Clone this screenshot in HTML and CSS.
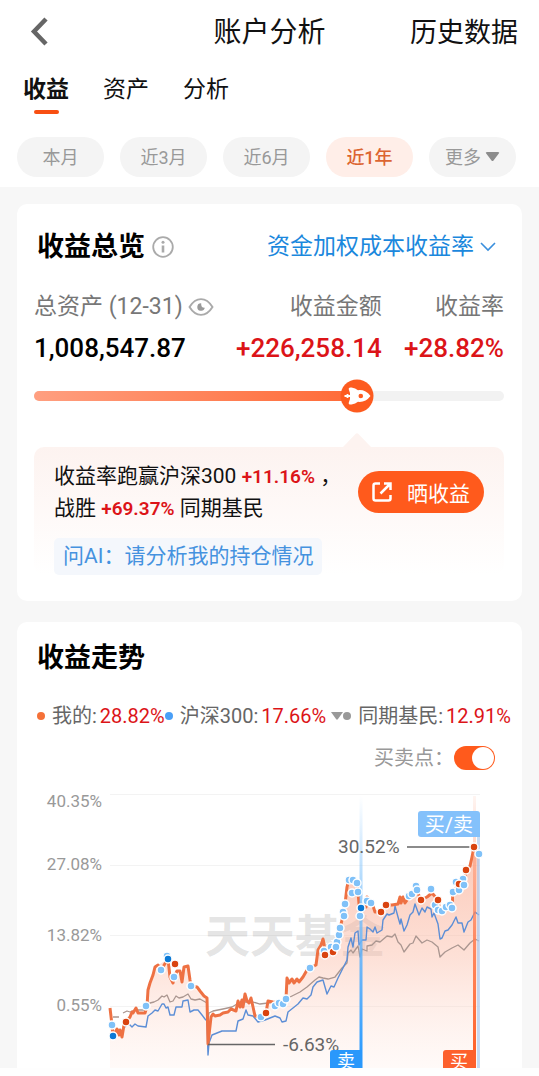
FILE: index.html
```html
<!DOCTYPE html>
<html lang="zh-CN">
<head>
<meta charset="utf-8">
<meta name="viewport" content="width=device-width, initial-scale=1">
<title>账户分析</title>
<link rel="stylesheet" href="styles.css">
</head>
<body>
<header class="top">
  <div class="navbar">
    <button class="back" aria-label="返回"><svg width="18" height="30" viewBox="0 0 18 30" fill="none" stroke="#666" stroke-width="4.5"><path d="M16 2 4 14.500 16 27"/></svg></button>
    <h1 class="page-title">账户分析</h1>
    <a class="history" href="#">历史数据</a>
  </div>
  <nav class="tabs">
    <a class="tab tab-active" href="#">收益</a>
    <a class="tab" href="#">资产</a>
    <a class="tab" href="#">分析</a>
  </nav>
  <div class="chips">
    <button class="chip">本月</button>
    <button class="chip">近3月</button>
    <button class="chip">近6月</button>
    <button class="chip chip-active">近1年</button>
    <button class="chip">更多<svg width="15" height="11" viewBox="0 0 15 11" fill="#8c8c8c"><path d="M2 1h11q2 0 .8 1.500L8.500 9.500q-1 1.200-2 0L1.200 2.500Q0 1 2 1z"/></svg></button>
  </div>
</header>
<main class="content">
  <section class="card overview">
    <div class="card-head">
      <h2 class="card-title">收益总览</h2>
      <svg class="info" width="22" height="22" viewBox="0 0 22 22" fill="none" stroke="#aaa" stroke-width="1.800"><circle cx="11" cy="11" r="9.800"/><path d="M11 9.500v7" stroke-width="2.600"/><circle cx="11" cy="6.300" r="1.500" fill="#aaa" stroke="none"/></svg>
      <button class="rate-type">资金加权成本收益率<svg width="16" height="10" viewBox="0 0 16 10" fill="none" stroke="#3a8fdd" stroke-width="1.600"><path d="m1 1 7 7 7-7"/></svg></button>
    </div>
    <dl class="stats">
      <div class="stat">
        <dt>总资产 (12-31)<svg width="26" height="20" viewBox="0 0 26 20" fill="none" stroke="#aaa" stroke-width="1.900"><path d="M1.500 10C8-.5 18-.5 24.500 10 18 20.500 8 20.500 1.500 10z"/><path d="M13.200 6.200a3.800 3.800 0 1 0 3.600 4.600q-4 .2-3.600-4.600z" fill="#999" stroke="none"/></svg></dt>
        <dd>1,008,547.87</dd>
      </div>
      <div class="stat stat-right"><dt>收益金额</dt><dd class="up">+226,258.14</dd></div>
      <div class="stat stat-right"><dt>收益率</dt><dd class="up">+28.82%</dd></div>
    </dl>
    <div class="rank" role="progressbar" aria-label="战胜同期基民" aria-valuenow="69">
      <div class="rank-fill" style="width:68.7%"></div>
      <svg class="rocket" style="left:68.7%" width="34" height="34" viewBox="0 0 34 34"><circle cx="17" cy="17" r="16.500" fill="#fd5b1f"/><path d="M10 14 8.800 10.500Q8.200 8 11.500 8.500q4 .7 6.500 2.700 7.500-.8 12.500 5.800-5 6.600-12.500 5.800-2.500 2-6.500 2.700-3.300.5-2.700-2L10 20z" fill="#fff"/><path d="M4.500 17h7M7.500 15v4" stroke="#fff" stroke-width="1.800"/><circle cx="20.800" cy="17" r="2.300" fill="#fd5b1f"/></svg>
    </div>
    <div class="notch-row" aria-hidden="true"><svg class="notch" style="left:68.7%" width="28" height="14" viewBox="0 0 28 14" fill="#fdf3f0"><path d="M0 14 12.500 1q1.500-1.500 3 0L28 14z"/></svg></div>
    <div class="summary">
      <div class="summary-row">
        <p class="summary-text">收益率跑赢沪深300 <b class="num">+11.16%</b> ，<br>战胜 <b class="num">+69.37%</b> 同期基民</p>
        <button class="share"><svg width="20" height="20" viewBox="0 0 20 20" fill="none" stroke="#fff" stroke-width="2.500"><path d="M8 1.500H3.500q-2 0-2 2v13q0 2 2 2h13q2 0 2-2V13M8.500 11.500 17.500 2.500M12 1.500h6.500V8"/></svg>晒收益</button>
      </div>
      <a class="ask" href="#">问AI：请分析我的持仓情况</a>
    </div>
  </section>

  <section class="card trend">
    <h2 class="card-title">收益走势</h2>
    <ul class="legend">
      <li><i class="dot dot-mine"></i>我的: <span class="up">28.82%</span></li>
      <li><i class="dot dot-index"></i>沪深300: <span class="up">17.66%</span><svg class="caret" width="12" height="8" viewBox="0 0 12 8" fill="#999"><path d="M0 0h12L6.800 7.200q-.8.900-1.600 0z"/></svg></li>
      <li><i class="dot dot-peer"></i>同期基民: <span class="up">12.91%</span></li>
    </ul>
    <div class="switch-row"><label for="trades">买卖点：</label><input class="switch" id="trades" type="checkbox" role="switch" checked></div>
    <svg class="chart" viewBox="17 784 505 284" role="img" aria-label="收益走势">
      <defs>
        <linearGradient id="area" x1="0" y1="0" x2="0" y2="1"><stop offset="0" stop-color="#f9aa90" stop-opacity=".65"/><stop offset=".5" stop-color="#fbbba6" stop-opacity=".45"/><stop offset="1" stop-color="#ffe5dc" stop-opacity=".2"/></linearGradient>
        <linearGradient id="sell" gradientUnits="userSpaceOnUse" x1="0" y1="796" x2="0" y2="1068"><stop offset="0" stop-color="#8fcaff" stop-opacity="0"/><stop offset=".4" stop-color="#7cc0fa" stop-opacity=".8"/><stop offset="1" stop-color="#2196ff"/></linearGradient>
        <linearGradient id="buy" gradientUnits="userSpaceOnUse" x1="0" y1="796" x2="0" y2="1068"><stop offset="0" stop-color="#ff9b78" stop-opacity=".1"/><stop offset=".5" stop-color="#ff8055" stop-opacity=".85"/><stop offset="1" stop-color="#ff5a1f"/></linearGradient>
        <path id="mine" d="M110 1008l2 17 1 11 4-7 2 6 1-5 2 7 2-12 2-3 4-5 2-5 1 1 3-5 2 5h7l2-7 1-16 2-7 3-8 2-8 3-2 3 5 5-8 2-3 2 18 3 6 1-6 3-6h3l2 11 2-15 4-1 2 14 1 6 6 1 3 4 4 5 3 2 1 46 3-27 2-3 2 2 5-1 3-2 5-1 3-3 5 2 2-10 2 6 2-7 1 7 2-13 2 7 2 2 2-5 2 9 2 9 5 1 6-4 2-12 5 1 7 1 3 1 3-5 1-21 2 5 3-4 2 4 3-4 2 3 4-5 4-7 3-2 6-3 2-15 3-5 2-6 1 4 1 12 8-3 3-5 3-12 1-7 3-12 2-12 2-17 2-8 8 4 1 9 2 24 1-8 5-1 1-10 5 6 3 9h6l5-7h6l6-1 2-7 1 6 2-6 2 6 5-7 6-9 1 4 4 9 6-3 5-4 6 7 2 12 12-4 1-16 4-5 7-2 2-15 4-4 2-9 2-10 5 6"/>
      </defs>
      <g stroke="#f3f3f3"><path d="M110 794.500H480M110 865.500H480M110 935.500H480M110 1006.500H480"/></g>
      <g class="axis" text-anchor="end"><text x="102" y="807">40.35%</text><text x="102" y="870">27.08%</text><text x="102" y="941">13.82%</text><text x="102" y="1011">0.55%</text></g>
      <text class="watermark" x="205" y="953">天天基金</text>
      <path fill="url(#area)" d="M110 1068V1008L113 1036 117 1029 122 1037 126 1022 136 1008 138 1013H145L148 990 155 967 168 959 173 983 177 971 182 982 184 967 188 966 191 986 204 996 207 998 208 1044 211 1017 236 1011 245 994 255 1016 266 1013 268 1001 283 1004 286 999 287 978 299 982 310 968 316 965 323 939 325 955 333 952 339 935 347 887 349 879 357 883 360 916 367 897 375 912 386 905 398 904 416 887 421 900 432 893 440 912 452 908 457 887 464 885 474 847 479 853V1068z"/>
      <g fill="none" stroke-linejoin="round">
        <path stroke="#aa9690" stroke-width="1.300" d="M113 1017h6M123 1013l4-2 3 1 5-2h10l5-7 4-1 4-2 4-4 2 1 3-2 3 7 3-1 3-5 3 2 4-1 5-3 3 5 4 1 5-1 7 4 1 17 1-7 4-2 10-2 9-2 5-3 8-2h8l7 2 8-1 9-1 13-5 10-5 7-5 8-7 4-3 4 1 5 1 7-2 7-9 5-5 1-10 3-3 2 3 5-7 2 11 2-8 5 2V946l5-1 4-4 4 1 7-6 5 1 3-3 3 8 3 3 3 7 6-8 3-1 3-7 6 7 5-3 5 2 6 5 2 10 5-5 7-4 6-3 6 5 6-7 5-4 4 2"/>
        <path stroke="#5c8ed6" stroke-width="1.400" d="M125 1027l3-4 4 4 3-3 3 2 8 1 2-11 4-3 3-3 3 1 4-7h2l2 4 2-1 2 8h4l2-8h6l1-6 5-1 2 12 4-2h4l4 5 3 4 2 2 1 34 1-12 3-8 10-4h14l2-10 5-2 3-9 2 5 5 1 5 6 7-2 5-2 5-2 5 2 2 4 4-1 2-9 5-4 5-4 5-6 4 1 4-4 2-8 4-5 6-2 4 14 4-8 3 1 4-9 5-10 4-8 1-13 3-9 2 9 2-14 3-2 1 14 3-5 4 0 1-13 3 2 3 3 2-5 2 6 5-3 1-10 4-6 2 1 5-2 1-7 3 11 2 7 1-5 3 12 3-6 3-10 3-3 2-8 4 11 3-7 3 4 2-5 4 2 1 8 2-4 4 11 2 15 2-1 3-7 3-1 4-5 4-8 2 6 4 0 2 9 4-10 3-2 4-8 4 3"/>
        <use href="#mine" stroke="#ee7143" stroke-width="3"/>
      </g>
      <path fill="url(#sell)" d="M359.500 796h3v272h-3z"/>
      <path fill="#a9caf0" fill-opacity=".65" d="M477 836h3v232h-3z"/>
      <path fill="url(#buy)" d="M473 796h3v272h-3z"/>
      <g class="trade-light"><circle cx="112" cy="1025" r="4"/><circle cx="146" cy="1006" r="4"/><circle cx="161" cy="970" r="4"/><circle cx="167" cy="956" r="4"/><circle cx="174" cy="977" r="4"/><circle cx="191" cy="986" r="4"/><circle cx="261" cy="1017" r="4"/><circle cx="275" cy="1006" r="4"/><circle cx="279" cy="1003" r="4"/><circle cx="283" cy="1004" r="4"/><circle cx="286" cy="999" r="4"/><circle cx="310" cy="968" r="4"/><circle cx="324" cy="951" r="4"/><circle cx="331" cy="947" r="4"/><circle cx="336" cy="947" r="4"/><circle cx="337" cy="942" r="4"/><circle cx="339" cy="935" r="4"/><circle cx="340" cy="928" r="4"/><circle cx="343" cy="912" r="4"/><circle cx="344" cy="916" r="4"/><circle cx="345" cy="904" r="4"/><circle cx="349" cy="880" r="4"/><circle cx="353" cy="880" r="4"/><circle cx="357" cy="883" r="4"/><circle cx="352" cy="893" r="4"/><circle cx="358" cy="892" r="4"/><circle cx="360" cy="916" r="4"/><circle cx="367" cy="901" r="4"/><circle cx="371" cy="903" r="4"/><circle cx="409" cy="896" r="4"/><circle cx="412" cy="894" r="4"/><circle cx="416" cy="886" r="4"/><circle cx="417" cy="890" r="4"/><circle cx="431" cy="889" r="4"/><circle cx="435" cy="905" r="4"/><circle cx="438" cy="910" r="4"/><circle cx="442" cy="911" r="4"/><circle cx="446" cy="907" r="4"/><circle cx="450" cy="905" r="4"/><circle cx="452" cy="908" r="4"/><circle cx="453" cy="892" r="4"/><circle cx="459" cy="890" r="4"/><circle cx="456" cy="882" r="4"/><circle cx="463" cy="879" r="4"/></g>
      <g class="trade-buy"><circle cx="126" cy="1022" r="4"/><circle cx="175" cy="964" r="4"/><circle cx="266" cy="1013" r="4"/><circle cx="325" cy="955" r="4"/><circle cx="333" cy="952" r="4"/><circle cx="381" cy="912" r="4"/><circle cx="386" cy="905" r="4"/><circle cx="421" cy="900" r="4"/><circle cx="438" cy="900" r="4"/><circle cx="459" cy="884" r="4"/><circle cx="466" cy="870" r="4"/></g>
      <g class="trade-light"><circle cx="336" cy="947" r="4"/><circle cx="464" cy="885" r="4"/><circle cx="479" cy="854" r="4"/></g>
      <g class="trade-sell"><circle cx="113" cy="1036" r="4"/><circle cx="168" cy="959" r="4"/><circle cx="361" cy="908" r="4"/></g>
      <path d="M208 1044.500H275M407 847H474" stroke="#666" stroke-width="1.700"/>
      <g class="trade-buy"><circle cx="474" cy="847" r="4"/></g>
      <g class="peak"><text x="338" y="853">30.52%</text><text x="283" y="1051">-6.63%</text></g>
      <path fill="#84c1fb" d="M421 811h56q3 0 3 3v23h-59q-3 0-3-3v-20q0-3 3-3z"/>
      <path fill="#2a98fb" d="M333 1050h29v18h-32v-15q0-3 3-3z"/>
      <path fill="#fd602c" d="M446 1050h30v18h-33v-15q0-3 3-3z"/>
      <g class="flag" text-anchor="middle"><text x="449" y="832">买/卖</text><text class="flag-small" x="346" y="1068">卖</text><text class="flag-small" x="459" y="1068">买</text></g>
    </svg>
  </section>
</main>
</body>
</html>
```

FILE: styles.css
```css
* { box-sizing: border-box; }
body {
  margin: 0;
  background: #fefefe;
  color: #111;
  font-family: Roboto, "Noto Sans CJK SC", sans-serif;
  font-size: 20px;
}
h1, h2, p, dl, dd, ul { margin: 0; padding: 0; font-weight: 400; }
a { color: inherit; text-decoration: none; }
button { border: 0; background: none; padding: 0; margin: 0; font: inherit; color: inherit; cursor: pointer; }
svg { display: block; flex: none; }

.top { background: #fff; padding-bottom: 10px; }
.navbar {
  display: grid;
  grid-template-columns: 1fr auto 1fr;
  align-items: center;
  height: 66px;
  padding: 0 21px;
}
.back { justify-self: start; padding: 0 0 2px 9px; }
.page-title { font-size: 28px; line-height: 40px; }
.history { justify-self: end; font-size: 27px; line-height: 40px; white-space: nowrap; }

.tabs { display: flex; gap: 34px; padding: 8px 23px 0; }
.tab { display: flex; flex-direction: column; align-items: center; height: 63px; font-size: 23px; line-height: 32px; }
.tab-active { font-weight: 700; }
.tab-active::after { content: ""; width: 25px; height: 4px; margin-top: 4px; border-radius: 2px; background: #f84f12; }

.chips { display: grid; grid-template-columns: repeat(5, 1fr); gap: 16px; padding: 0 23px 0 17px; }
.chip {
  display: flex;
  align-items: center;
  justify-content: center;
  gap: 4px;
  height: 40px;
  padding-bottom: 2px;
  border-radius: 20px;
  background: #f4f4f4;
  color: #999;
  font-size: 18px;
  white-space: nowrap;
}
.chip-active { background: #ffeee8; color: #dc6531; font-weight: 500; }

.content {
  display: flex;
  flex-direction: column;
  gap: 21px;
  padding: 17px 17px 0;
  background: #f7f7f7;
}
.card { background: #fff; border-radius: 10px; }
.card-title { font-size: 27px; line-height: 36px; font-weight: 700; color: #000; }
.up { color: #dc1418; }

.overview { padding: 25px 18px 26px 17px; }
.card-head { display: flex; align-items: center; gap: 7px; padding: 0 8px 0 3px; }
.rate-type { display: flex; align-items: center; gap: 6px; margin-left: auto; color: #1b88dd; font-size: 23px; line-height: 36px; white-space: nowrap; }

.stats { display: flex; justify-content: space-between; padding-top: 23px; }
.stat dt { display: flex; align-items: center; gap: 5px; color: #777; font-size: 23px; line-height: 38px; white-space: nowrap; }
.stat dd { font-size: 26px; line-height: 44px; font-weight: 500; color: #000; }
.stat dd.up { color: #dc1418; }
.stat-right dt { justify-content: flex-end; }
.stat-right dd { text-align: right; }

.rank { position: relative; height: 10px; margin-top: 21px; border-radius: 5px; background: #f2f2f2; }
.rank-fill { height: 10px; border-radius: 5px; background: linear-gradient(90deg, #ff9f80, #ff6a36); }
.rocket { position: absolute; top: -12px; transform: translateX(-50%); }
.notch-row { position: relative; height: 14px; margin-top: 32px; }
.notch { position: absolute; top: 0; transform: translateX(-50%); }

.summary { padding: 13px 20px 0; border-radius: 10px; background: linear-gradient(#fdf3f0, #fff); }
.summary-row { display: flex; justify-content: space-between; align-items: center; }
.summary-text { font-size: 21px; line-height: 32px; white-space: nowrap; }
.num { font-size: 19px; line-height: 1; font-weight: 600; color: #dc1418; }
.share {
  display: flex;
  align-items: center;
  gap: 15px;
  height: 42px;
  padding: 0 14px;
  border-radius: 21px;
  background: #ff5a1c;
  color: #fff;
  font-size: 21px;
  white-space: nowrap;
}
.ask { display: block; width: fit-content; margin-top: 14px; padding: 0 9px; border-radius: 5px; background: #f4f7fc; color: #4592df; font-size: 21px; line-height: 37px; }

.trend { padding: 18px 0 0; border-radius: 10px 10px 0 0; }
.trend .card-title { padding: 0 20px; }
.legend { display: flex; padding: 25px 13px 0 20px; justify-content: space-between; list-style: none; color: #666; font-size: 20px; line-height: 30px; white-space: nowrap; }
.legend li { display: flex; align-items: center; gap: 3px; }
.dot { width: 8px; height: 8px; margin-right: 4px; border-radius: 50%; }
.dot-mine { background: #f57138; }
.dot-index { background: #4a9ff7; }
.dot-peer { background: #999; }
.caret { margin-left: 2px; }
.switch-row { display: flex; align-items: center; justify-content: flex-end; padding: 10px 27px 0 0; color: #999; font-size: 20px; line-height: 34px; }
.switch {
  appearance: none;
  width: 41px;
  height: 24px;
  margin: 0;
  padding: 1px;
  border-radius: 12px;
  background: #ccc;
}
.switch::before { content: ""; display: block; width: 22px; height: 22px; border-radius: 50%; background: #fff; }
.switch:checked { background: #ff5a1c; }
.switch:checked::before { margin-left: auto; }

.chart { width: 100%; height: auto; margin-top: 9px; overflow: visible; }
.axis { font-size: 17px; fill: #999; }
.peak { font-size: 19px; fill: #666; }
.flag { font-size: 20px; fill: #fff; }
.flag-small { font-size: 18px; }
.watermark { font-size: 45px; font-weight: 700; fill: #777; fill-opacity: .2; }
.trade-light { fill: #7fc1f8; stroke: #fff; stroke-width: 1.5px; }
.trade-buy { fill: #d9430f; stroke: #fff; stroke-width: 1.5px; }
.trade-sell { fill: #0b79d6; stroke: #fff; stroke-width: 1.5px; }
```
